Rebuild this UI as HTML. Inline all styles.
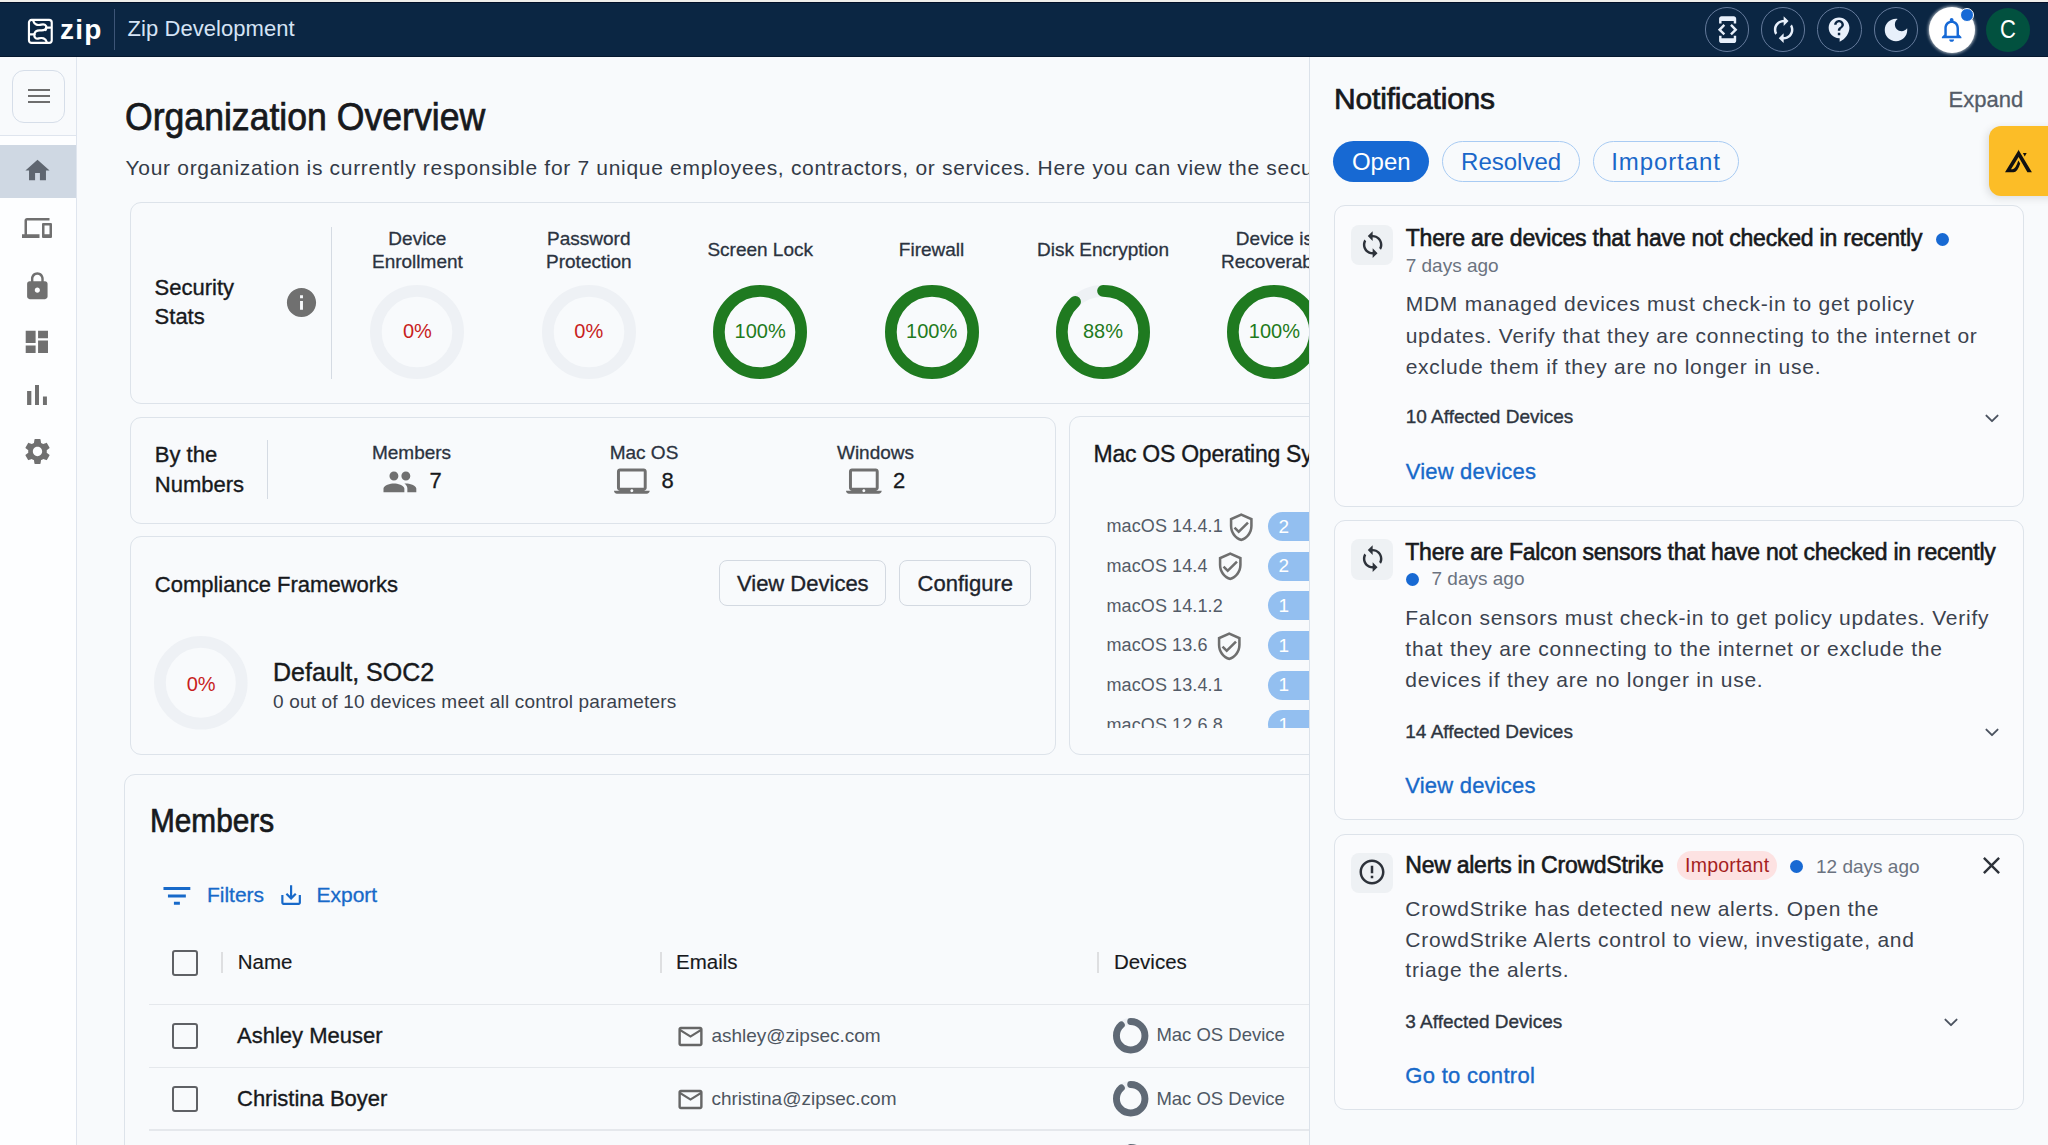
<!DOCTYPE html>
<html><head><meta charset="utf-8"><style>
html,body{margin:0;padding:0;}
body{width:2048px;height:1145px;overflow:hidden;position:relative;background:#f8fafc;font-family:"Liberation Sans", sans-serif;}
.t{position:absolute;line-height:1;white-space:nowrap;font-family:"Liberation Sans", sans-serif;}
svg{display:block;}
</style></head><body>
<div style="position:absolute;left:0px;top:0px;width:2048px;height:2px;box-sizing:border-box;background:#efeeea;"></div><div style="position:absolute;left:0px;top:2px;width:2048px;height:55px;box-sizing:border-box;background:#0b2643;border-top:1px solid #021028;border-bottom:1px solid #05182f;"></div><svg style="position:absolute;left:24px;top:15px" width="32" height="32" viewBox="0 0 32 32">
<rect x="4.95" y="4.9" width="22.8" height="23" rx="2.6" fill="none" stroke="#fff" stroke-width="2.15"/>
<g fill="none" stroke="#fff" stroke-width="2.2" stroke-linecap="round">
<path d="M9.3 6 C10.3 9.8 14 10.6 17.3 9.6 C20.3 8.7 22.8 10.3 22.3 12.6 C21.8 15 19.2 15.6 16.6 15.4 C13.8 15.2 10.8 16.2 10.4 19.2"/>
<path d="M22.3 12.6 L26.5 12.6 M10.4 19.4 L6 19.4"/>
<path d="M22.7 27 C21.7 23.2 18 22.4 14.7 23.4 C11.7 24.3 9.9 22.2 10.4 19.4"/>
<path d="M22.3 12.6 C22.3 13.6 22 14.5 21.6 15" />
</g>
</svg><div class="t" style="left:60px;top:16.40px;font-size:28px;font-weight:700;color:#ffffff;letter-spacing:1.2px;">zip</div><div style="position:absolute;left:114px;top:9px;width:1px;height:41px;box-sizing:border-box;background:#3d5577;"></div><div class="t" style="left:127.6px;top:17.60px;font-size:22px;font-weight:400;color:#d5e3f5;letter-spacing:0.05px;">Zip Development</div><div style="position:absolute;left:1704.5px;top:7.3px;width:44.4px;height:44.4px;box-sizing:border-box;border:1.5px solid #63799a;border-radius:50%;"></div><div style="position:absolute;left:1760.8px;top:7.3px;width:44.4px;height:44.4px;box-sizing:border-box;border:1.5px solid #63799a;border-radius:50%;"></div><div style="position:absolute;left:1817.3px;top:7.3px;width:44.4px;height:44.4px;box-sizing:border-box;border:1.5px solid #63799a;border-radius:50%;"></div><div style="position:absolute;left:1873.8px;top:7.3px;width:44.4px;height:44.4px;box-sizing:border-box;border:1.5px solid #63799a;border-radius:50%;"></div><svg style="position:absolute;left:1712.55px;top:14.85px;" width="29.3" height="29.3" viewBox="0 0 24 24"><path fill="#e8f0fb" d="M7 5h10v2h2V3c0-1.1-.9-1.99-2-1.99L7 1c-1.1 0-2 .9-2 2v4h2V5zm8.41 11.59L20 12l-4.59-4.59L14 8.83 17.17 12 14 15.17l1.41 1.42zM10 15.17L6.83 12 10 8.83 8.59 7.41 4 12l4.59 4.59L10 15.17zM17 19H7v-2H5v4c0 1.1.9 2 2 2h10c1.1 0 2-.9 2-2v-4h-2v2z"/></svg><svg style="position:absolute;left:1768.9499999999998px;top:14.85px;" width="29.3" height="29.3" viewBox="0 0 24 24"><path fill="#e8f0fb" d="M12 6v3l4-4-4-4v3c-4.42 0-8 3.58-8 8 0 1.57.46 3.03 1.24 4.26L6.7 14.8c-.45-.83-.7-1.79-.7-2.8 0-3.31 2.69-6 6-6zm6.76 1.74L17.3 9.2c.44.84.7 1.79.7 2.8 0 3.31-2.69 6-6 6v-3l-4 4 4 4v-3c4.42 0 8-3.58 8-8 0-1.57-.46-3.03-1.24-4.26z"/></svg><svg style="position:absolute;left:1824.77px;top:15.059999999999999px;" width="29.3" height="29.3" viewBox="0 0 24 24"><path fill="#e8f0fb" d="M11.5 2C6.81 2 3 5.81 3 10.5S6.81 19 11.5 19h.5v3c4.86-2.34 8-7 8-11.5C20 5.81 16.19 2 11.5 2zm1 14.5h-2v-2h2v2zm0-3.5h-2c0-3.25 3-3 3-5 0-1.1-.9-2-2-2s-2 .9-2 2h-2c0-2.21 1.79-4 4-4s4 1.79 4 4c0 2.5-3 2.75-3 5z"/></svg><svg style="position:absolute;left:1881.3px;top:14.5px;" width="30" height="30" viewBox="0 0 24 24"><path fill="#e8f0fb" d="M12 3c-4.97 0-9 4.03-9 9s4.03 9 9 9 9-4.03 9-9c0-.46-.04-.92-.1-1.36-.98 1.37-2.58 2.26-4.4 2.26-2.98 0-5.4-2.42-5.4-5.4 0-1.81.89-3.42 2.26-4.4-.44-.06-.9-.1-1.36-.1z"/></svg><div style="position:absolute;left:1929px;top:6.600000000000001px;width:46px;height:46px;box-sizing:border-box;background:#fff;border-radius:50%;box-shadow:0 0 3px 1px rgba(255,255,255,0.6);"></div><svg style="position:absolute;left:1937.35px;top:15.055px;" width="29.3" height="29.3" viewBox="0 0 24 24"><path fill="#1669d6" d="M12 22c1.1 0 2-.9 2-2h-4c0 1.1.9 2 2 2zm6-6v-5c0-3.07-1.63-5.64-4.5-6.32V4c0-.83-.67-1.5-1.5-1.5s-1.5.67-1.5 1.5v.68C7.64 5.36 6 7.92 6 11v5l-2 2v1h16v-1l-2-2zm-2 1H8v-6c0-2.48 1.51-4.5 4-4.5s4 2.02 4 4.5v6z"/></svg><div style="position:absolute;left:1960.3px;top:7.699999999999999px;width:14px;height:14px;box-sizing:border-box;background:#1669d6;border:1.5px solid #fff;border-radius:50%;"></div><div style="position:absolute;left:1986px;top:7.5px;width:44px;height:44px;box-sizing:border-box;background:#02513f;border-radius:50%;"></div><div class="t" style="left:1308px;width:1400px;text-align:center;top:17.45px;font-size:25px;font-weight:400;color:#fff;letter-spacing:0px;transform:scaleX(0.88);">C</div><div style="position:absolute;left:0px;top:57px;width:77px;height:1088px;box-sizing:border-box;background:#fdfeff;border-right:1px solid #dfe5ee;"></div><div style="position:absolute;left:0px;top:57px;width:76px;height:78px;box-sizing:border-box;background:#f8fafc;"></div><div style="position:absolute;left:11.5px;top:70px;width:53px;height:53.2px;box-sizing:border-box;border:1.3px solid #d6dee9;border-radius:12px;background:#f8fafc;"></div><div style="position:absolute;left:27.5px;top:88.8px;width:22.5px;height:2.4px;box-sizing:border-box;background:#6e6e6e;"></div><div style="position:absolute;left:27.5px;top:94.8px;width:22.5px;height:2.4px;box-sizing:border-box;background:#6e6e6e;"></div><div style="position:absolute;left:27.5px;top:100.8px;width:22.5px;height:2.4px;box-sizing:border-box;background:#6e6e6e;"></div><div style="position:absolute;left:0px;top:135px;width:76px;height:1px;box-sizing:border-box;background:#dfe5ee;"></div><div style="position:absolute;left:0px;top:145px;width:76px;height:53px;box-sizing:border-box;background:#cfd8e3;"></div><svg style="position:absolute;left:22.5px;top:155.5px;" width="29" height="29" viewBox="0 0 24 24"><path fill="#5f6670" d="M10 20v-6h4v6h5v-8h3L12 3 2 12h3v8z"/></svg><svg style="position:absolute;left:22px;top:212.5px;" width="30" height="30" viewBox="0 0 24 24"><path fill="#707070" d="M4 6h18V4H4c-1.1 0-2 .9-2 2v11H0v3h14v-3H4V6zm19 2h-6c-.55 0-1 .45-1 1v10c0 .55.45 1 1 1h6c.55 0 1-.45 1-1V9c0-.55-.45-1-1-1zm-1 9h-4v-7h4v7z"/></svg><svg style="position:absolute;left:21.75px;top:270.65px;" width="30.7" height="30.7" viewBox="0 0 24 24"><path fill="#707070" d="M18 8h-1V6c0-2.76-2.24-5-5-5S7 3.24 7 6v2H6c-1.1 0-2 .9-2 2v10c0 1.1.9 2 2 2h12c1.1 0 2-.9 2-2V10c0-1.1-.9-2-2-2zm-6 9c-1.1 0-2-.9-2-2s.9-2 2-2 2 .9 2 2-.9 2-2 2zm3.1-9H8.9V6c0-1.71 1.39-3.1 3.1-3.1 1.71 0 3.1 1.39 3.1 3.1v2z"/></svg><svg style="position:absolute;left:22.25px;top:326.84999999999997px;" width="29.7" height="29.7" viewBox="0 0 24 24"><path fill="#707070" d="M3 13h8V3H3v10zm0 8h8v-6H3v6zm10 0h8V11h-8v10zm0-18v6h8V3h-8z"/></svg><svg style="position:absolute;left:20px;top:378.46px;" width="34" height="34" viewBox="0 0 24 24"><path fill="#707070" d="M5 9.2h3V19H5zM10.6 5h2.8v14h-2.8zm5.6 8H19v6h-2.8z"/></svg><svg style="position:absolute;left:21.5px;top:436.1px;" width="31" height="31" viewBox="0 0 24 24"><path fill="#707070" d="M19.14 12.94c.04-.3.06-.61.06-.94 0-.32-.02-.64-.07-.94l2.03-1.58c.18-.14.23-.41.12-.61l-1.92-3.32c-.12-.22-.37-.29-.59-.22l-2.39.96c-.5-.38-1.03-.7-1.62-.94l-.36-2.54c-.04-.24-.24-.41-.48-.41h-3.84c-.24 0-.43.17-.47.41l-.36 2.54c-.59.24-1.13.57-1.62.94l-2.39-.96c-.22-.08-.47 0-.59.22L2.74 8.87c-.12.21-.08.47.12.61l2.03 1.58c-.05.3-.09.63-.09.94s.02.64.07.94l-2.03 1.58c-.18.14-.23.41-.12.61l1.92 3.32c.12.22.37.29.59.22l2.39-.96c.5.38 1.03.7 1.62.94l.36 2.54c.05.24.24.41.48.41h3.84c.24 0 .44-.17.47-.41l.36-2.54c.59-.24 1.13-.56 1.62-.94l2.39.96c.22.08.47 0 .59-.22l1.92-3.32c.12-.22.07-.47-.12-.61l-2.01-1.58zM12 15.6c-1.98 0-3.6-1.62-3.6-3.6s1.62-3.6 3.6-3.6 3.6 1.62 3.6 3.6-1.62 3.6-3.6 3.6z"/></svg><div class="t" style="left:124.6px;top:97.25px;font-size:39px;font-weight:400;color:#17191c;letter-spacing:0px;transform:scaleX(0.913);transform-origin:0 0;-webkit-text-stroke:0.75px #17191c;">Organization Overview</div><div class="t" style="left:125.6px;top:156.85px;font-size:21px;font-weight:400;color:#333b47;letter-spacing:0.69px;">Your organization is currently responsible for 7 unique employees, contractors, or services. Here you can view the security posture of your organization.</div><div style="position:absolute;left:130px;top:202px;width:1400px;height:201.5px;box-sizing:border-box;border:1.4px solid #dde3ea;border-radius:11px;"></div><div class="t" style="left:154.6px;top:276.80px;font-size:22px;font-weight:400;color:#17191c;letter-spacing:0px;-webkit-text-stroke:0.35px #17191c;">Security</div><div class="t" style="left:154.6px;top:306.10px;font-size:22px;font-weight:400;color:#17191c;letter-spacing:0px;-webkit-text-stroke:0.35px #17191c;">Stats</div><svg style="position:absolute;left:283.5px;top:285.3px;" width="35" height="35" viewBox="0 0 24 24"><path fill="#707070" d="M12 2C6.48 2 2 6.48 2 12s4.48 10 10 10 10-4.48 10-10S17.52 2 12 2zm1 15h-2v-6h2v6zm0-8h-2V7h2v2z"/></svg><div style="position:absolute;left:330.5px;top:226.6px;width:1.2px;height:152.4px;box-sizing:border-box;background:#d5dbe3;"></div><div class="t" style="left:-282.6px;width:1400px;text-align:center;top:228.65px;font-size:19px;font-weight:400;color:#2b3340;letter-spacing:0px;-webkit-text-stroke:0.3px #2b3340;">Device</div><div class="t" style="left:-282.6px;width:1400px;text-align:center;top:252.35px;font-size:19px;font-weight:400;color:#2b3340;letter-spacing:0px;-webkit-text-stroke:0.3px #2b3340;">Enrollment</div><svg style="position:absolute;left:369.4px;top:284px" width="96" height="96" viewBox="0 0 96 96"><circle cx="48.0" cy="48.0" r="41.15" fill="none" stroke="#eef1f5" stroke-width="11.700000000000003"/></svg><div class="t" style="left:-282.6px;width:1400px;text-align:center;top:321.20px;font-size:20px;font-weight:400;color:#c81e1e;letter-spacing:0px;">0%</div><div class="t" style="left:-111.20000000000005px;width:1400px;text-align:center;top:228.65px;font-size:19px;font-weight:400;color:#2b3340;letter-spacing:0px;-webkit-text-stroke:0.3px #2b3340;">Password</div><div class="t" style="left:-111.20000000000005px;width:1400px;text-align:center;top:252.35px;font-size:19px;font-weight:400;color:#2b3340;letter-spacing:0px;-webkit-text-stroke:0.3px #2b3340;">Protection</div><svg style="position:absolute;left:540.8px;top:284px" width="96" height="96" viewBox="0 0 96 96"><circle cx="48.0" cy="48.0" r="41.15" fill="none" stroke="#eef1f5" stroke-width="11.700000000000003"/></svg><div class="t" style="left:-111.20000000000005px;width:1400px;text-align:center;top:321.20px;font-size:20px;font-weight:400;color:#c81e1e;letter-spacing:0px;">0%</div><div class="t" style="left:60.200000000000045px;width:1400px;text-align:center;top:239.85px;font-size:19px;font-weight:400;color:#2b3340;letter-spacing:0px;-webkit-text-stroke:0.3px #2b3340;">Screen Lock</div><svg style="position:absolute;left:712.2px;top:284px" width="96" height="96" viewBox="0 0 96 96"><circle cx="48.0" cy="48.0" r="41.15" fill="none" stroke="#eef1f5" stroke-width="11.700000000000003"/><circle cx="48.0" cy="48.0" r="41.15" fill="none" stroke="#1f7a20" stroke-width="11.700000000000003"/></svg><div class="t" style="left:60.200000000000045px;width:1400px;text-align:center;top:321.20px;font-size:20px;font-weight:400;color:#1f7a20;letter-spacing:0px;">100%</div><div class="t" style="left:231.60000000000002px;width:1400px;text-align:center;top:239.85px;font-size:19px;font-weight:400;color:#2b3340;letter-spacing:0px;-webkit-text-stroke:0.3px #2b3340;">Firewall</div><svg style="position:absolute;left:883.6px;top:284px" width="96" height="96" viewBox="0 0 96 96"><circle cx="48.0" cy="48.0" r="41.15" fill="none" stroke="#eef1f5" stroke-width="11.700000000000003"/><circle cx="48.0" cy="48.0" r="41.15" fill="none" stroke="#1f7a20" stroke-width="11.700000000000003"/></svg><div class="t" style="left:231.60000000000002px;width:1400px;text-align:center;top:321.20px;font-size:20px;font-weight:400;color:#1f7a20;letter-spacing:0px;">100%</div><div class="t" style="left:403px;width:1400px;text-align:center;top:239.85px;font-size:19px;font-weight:400;color:#2b3340;letter-spacing:0px;-webkit-text-stroke:0.3px #2b3340;">Disk Encryption</div><svg style="position:absolute;left:1055px;top:284px" width="96" height="96" viewBox="0 0 96 96"><circle cx="48.0" cy="48.0" r="41.15" fill="none" stroke="#eef1f5" stroke-width="11.700000000000003"/><circle cx="48.0" cy="48.0" r="41.15" fill="none" stroke="#1f7a20" stroke-width="11.700000000000003" stroke-linecap="round" stroke-dasharray="227.52670634358716 258.55307539044" transform="rotate(-90 48.0 48.0)"/></svg><div class="t" style="left:403px;width:1400px;text-align:center;top:321.20px;font-size:20px;font-weight:400;color:#1f7a20;letter-spacing:0px;">88%</div><div class="t" style="left:574.4000000000001px;width:1400px;text-align:center;top:228.65px;font-size:19px;font-weight:400;color:#2b3340;letter-spacing:0px;-webkit-text-stroke:0.3px #2b3340;">Device is</div><div class="t" style="left:574.4000000000001px;width:1400px;text-align:center;top:252.35px;font-size:19px;font-weight:400;color:#2b3340;letter-spacing:0px;-webkit-text-stroke:0.3px #2b3340;">Recoverable</div><svg style="position:absolute;left:1226.4px;top:284px" width="96" height="96" viewBox="0 0 96 96"><circle cx="48.0" cy="48.0" r="41.15" fill="none" stroke="#eef1f5" stroke-width="11.700000000000003"/><circle cx="48.0" cy="48.0" r="41.15" fill="none" stroke="#1f7a20" stroke-width="11.700000000000003"/></svg><div class="t" style="left:574.4000000000001px;width:1400px;text-align:center;top:321.20px;font-size:20px;font-weight:400;color:#1f7a20;letter-spacing:0px;">100%</div><div style="position:absolute;left:130px;top:416.6px;width:926px;height:107px;box-sizing:border-box;border:1.4px solid #dde3ea;border-radius:11px;"></div><div class="t" style="left:154.8px;top:444.30px;font-size:22px;font-weight:400;color:#17191c;letter-spacing:0px;-webkit-text-stroke:0.35px #17191c;">By the</div><div class="t" style="left:154.8px;top:474.30px;font-size:22px;font-weight:400;color:#17191c;letter-spacing:0px;-webkit-text-stroke:0.35px #17191c;">Numbers</div><div style="position:absolute;left:267px;top:439.8px;width:1.2px;height:59.2px;box-sizing:border-box;background:#d5dbe3;"></div><div class="t" style="left:-288.5px;width:1400px;text-align:center;top:443.15px;font-size:19px;font-weight:400;color:#2b3340;letter-spacing:0px;-webkit-text-stroke:0.3px #2b3340;">Members</div><svg style="position:absolute;left:381.9px;top:464.4px;" width="35.8" height="35.8" viewBox="0 0 24 24"><path fill="#707070" d="M16 11c1.66 0 2.99-1.34 2.99-3S17.66 5 16 5c-1.66 0-3 1.34-3 3s1.34 3 3 3zm-8 0c1.66 0 2.99-1.34 2.99-3S9.66 5 8 5C6.34 5 5 6.34 5 8s1.34 3 3 3zm0 2c-2.33 0-7 1.17-7 3.5V19h14v-2.5c0-2.33-4.67-3.5-7-3.5zm8 0c-.29 0-.62.02-.97.05 1.16.84 1.97 1.97 1.97 3.45V19h6v-2.5c0-2.33-4.67-3.5-7-3.5z"/></svg><div class="t" style="left:429.4px;top:469.90px;font-size:22px;font-weight:400;color:#17191c;letter-spacing:0px;-webkit-text-stroke:0.3px #17191c;">7</div><div class="t" style="left:-56px;width:1400px;text-align:center;top:443.15px;font-size:19px;font-weight:400;color:#2b3340;letter-spacing:0px;-webkit-text-stroke:0.3px #2b3340;">Mac OS</div><svg style="position:absolute;left:614px;top:463.5px;" width="35.7" height="35.7" viewBox="0 0 24 24"><path fill="#707070" d="M20 18c1.1 0 1.99-.9 1.99-2L22 5c0-1.1-.9-2-2-2H4c-1.1 0-2 .9-2 2v11c0 1.1.9 2 2 2H0c0 1.1.9 2 2 2h20c1.1 0 2-.9 2-2h-4zM4 5h16v11H4V5zm8 14c-.55 0-1-.45-1-1s.45-1 1-1 1 .45 1 1-.45 1-1 1z"/></svg><div class="t" style="left:661.4px;top:469.90px;font-size:22px;font-weight:400;color:#17191c;letter-spacing:0px;-webkit-text-stroke:0.3px #17191c;">8</div><div class="t" style="left:175.5px;width:1400px;text-align:center;top:443.15px;font-size:19px;font-weight:400;color:#2b3340;letter-spacing:0px;-webkit-text-stroke:0.3px #2b3340;">Windows</div><svg style="position:absolute;left:846px;top:463.5px;" width="35.7" height="35.7" viewBox="0 0 24 24"><path fill="#707070" d="M20 18c1.1 0 1.99-.9 1.99-2L22 5c0-1.1-.9-2-2-2H4c-1.1 0-2 .9-2 2v11c0 1.1.9 2 2 2H0c0 1.1.9 2 2 2h20c1.1 0 2-.9 2-2h-4zM4 5h16v11H4V5zm8 14c-.55 0-1-.45-1-1s.45-1 1-1 1 .45 1 1-.45 1-1 1z"/></svg><div class="t" style="left:893px;top:469.90px;font-size:22px;font-weight:400;color:#17191c;letter-spacing:0px;-webkit-text-stroke:0.3px #17191c;">2</div><div style="position:absolute;left:1068.7px;top:416px;width:600px;height:339px;box-sizing:border-box;border:1.4px solid #dde3ea;border-radius:11px;"></div><div class="t" style="left:1093.5px;top:443.45px;font-size:23px;font-weight:400;color:#17191c;letter-spacing:-0.25px;-webkit-text-stroke:0.35px #17191c;">Mac OS Operating Systems</div><div style="position:absolute;left:1069px;top:500px;width:600px;height:227.5px;overflow:hidden;"><div class="t" style="left:37.5px;top:17.40px;font-size:18px;color:#535b67;letter-spacing:0.1px;">macOS 14.4.1</div><svg style="position:absolute;left:157.19px;top:11.73px" width="30.5" height="30.5" viewBox="0 0 24 24"><path fill="#6f6f6f" d="M12 1L3 5v6c0 5.55 3.84 10.74 9 12 5.16-1.26 9-6.45 9-12V5l-9-4zm7 10c0 4.52-2.98 8.69-7 9.93-4.02-1.24-7-5.41-7-9.93V6.3l7-3.11 7 3.11V11zm-11.59.59L6 13l4 4 8-8-1.41-1.42L10 14.17z"/></svg><div style="position:absolute;left:198.80px;top:12.00px;width:80px;height:29px;border-radius:14.5px;background:#93bff0;"></div><div class="t" style="left:209.50px;top:16.55px;font-size:19px;color:#fff;">2</div><div class="t" style="left:37.5px;top:57.06px;font-size:18px;color:#535b67;letter-spacing:0.1px;">macOS 14.4</div><svg style="position:absolute;left:145.99px;top:51.39px" width="30.5" height="30.5" viewBox="0 0 24 24"><path fill="#6f6f6f" d="M12 1L3 5v6c0 5.55 3.84 10.74 9 12 5.16-1.26 9-6.45 9-12V5l-9-4zm7 10c0 4.52-2.98 8.69-7 9.93-4.02-1.24-7-5.41-7-9.93V6.3l7-3.11 7 3.11V11zm-11.59.59L6 13l4 4 8-8-1.41-1.42L10 14.17z"/></svg><div style="position:absolute;left:198.80px;top:51.66px;width:80px;height:29px;border-radius:14.5px;background:#93bff0;"></div><div class="t" style="left:209.50px;top:56.21px;font-size:19px;color:#fff;">2</div><div class="t" style="left:37.5px;top:96.72px;font-size:18px;color:#535b67;letter-spacing:0.1px;">macOS 14.1.2</div><div style="position:absolute;left:198.80px;top:91.32px;width:80px;height:29px;border-radius:14.5px;background:#93bff0;"></div><div class="t" style="left:209.50px;top:95.87px;font-size:19px;color:#fff;">1</div><div class="t" style="left:37.5px;top:136.38px;font-size:18px;color:#535b67;letter-spacing:0.1px;">macOS 13.6</div><svg style="position:absolute;left:145.19px;top:130.71px" width="30.5" height="30.5" viewBox="0 0 24 24"><path fill="#6f6f6f" d="M12 1L3 5v6c0 5.55 3.84 10.74 9 12 5.16-1.26 9-6.45 9-12V5l-9-4zm7 10c0 4.52-2.98 8.69-7 9.93-4.02-1.24-7-5.41-7-9.93V6.3l7-3.11 7 3.11V11zm-11.59.59L6 13l4 4 8-8-1.41-1.42L10 14.17z"/></svg><div style="position:absolute;left:198.80px;top:130.98px;width:80px;height:29px;border-radius:14.5px;background:#93bff0;"></div><div class="t" style="left:209.50px;top:135.53px;font-size:19px;color:#fff;">1</div><div class="t" style="left:37.5px;top:176.04px;font-size:18px;color:#535b67;letter-spacing:0.1px;">macOS 13.4.1</div><div style="position:absolute;left:198.80px;top:170.64px;width:80px;height:29px;border-radius:14.5px;background:#93bff0;"></div><div class="t" style="left:209.50px;top:175.19px;font-size:19px;color:#fff;">1</div><div class="t" style="left:37.5px;top:215.70px;font-size:18px;color:#535b67;letter-spacing:0.1px;">macOS 12.6.8</div><div style="position:absolute;left:198.80px;top:210.30px;width:80px;height:29px;border-radius:14.5px;background:#93bff0;"></div><div class="t" style="left:209.50px;top:214.85px;font-size:19px;color:#fff;">1</div></div><div style="position:absolute;left:130px;top:535.6px;width:926px;height:219.4px;box-sizing:border-box;border:1.4px solid #dde3ea;border-radius:11px;"></div><div class="t" style="left:154.8px;top:573.90px;font-size:22px;font-weight:400;color:#17191c;letter-spacing:0px;-webkit-text-stroke:0.35px #17191c;">Compliance Frameworks</div><div style="position:absolute;left:719.3px;top:560.1px;width:167px;height:46.4px;box-sizing:border-box;border:1.3px solid #d3d9e1;border-radius:8px;"></div><div class="t" style="left:102.79999999999995px;width:1400px;text-align:center;top:573.30px;font-size:22px;font-weight:400;color:#1d232b;letter-spacing:0px;-webkit-text-stroke:0.35px #1d232b;">View Devices</div><div style="position:absolute;left:899.2px;top:560.1px;width:132.2px;height:46.4px;box-sizing:border-box;border:1.3px solid #d3d9e1;border-radius:8px;"></div><div class="t" style="left:265.29999999999995px;width:1400px;text-align:center;top:573.30px;font-size:22px;font-weight:400;color:#1d232b;letter-spacing:0px;-webkit-text-stroke:0.35px #1d232b;">Configure</div><svg style="position:absolute;left:153.39999999999998px;top:635.2px" width="95.6" height="95.6" viewBox="0 0 95.6 95.6"><circle cx="47.8" cy="47.8" r="40.9" fill="none" stroke="#eef1f5" stroke-width="11.799999999999997"/></svg><div class="t" style="left:-498.8px;width:1400px;text-align:center;top:673.50px;font-size:20px;font-weight:400;color:#c81e1e;letter-spacing:0px;">0%</div><div class="t" style="left:273px;top:660.45px;font-size:25px;font-weight:400;color:#17191c;letter-spacing:0px;-webkit-text-stroke:0.4px #17191c;">Default, SOC2</div><div class="t" style="left:273px;top:692.45px;font-size:19px;font-weight:400;color:#3a414c;letter-spacing:0.18px;">0 out of 10 devices meet all control parameters</div><div style="position:absolute;left:124.3px;top:773.9px;width:1400px;height:500px;box-sizing:border-box;border:1.4px solid #dde3ea;border-radius:11px;"></div><div class="t" style="left:150.1px;top:803.55px;font-size:33px;font-weight:400;color:#17191c;letter-spacing:0px;transform:scaleX(0.902);transform-origin:0 0;-webkit-text-stroke:0.7px #17191c;">Members</div><svg style="position:absolute;left:159.03px;top:877.62px;" width="35.8" height="35.8" viewBox="0 0 24 24"><path fill="#1769c9" d="M10 18h4v-2h-4v2zM3 6v2h18V6H3zm3 7h12v-2H6v2z"/></svg><div class="t" style="left:206.9px;top:883.95px;font-size:21px;font-weight:400;color:#1769c9;letter-spacing:0px;-webkit-text-stroke:0.3px #1769c9;">Filters</div><svg style="position:absolute;left:277.83000000000004px;top:881.9300000000001px;" width="26.2" height="26.2" viewBox="0 0 24 24"><path fill="#1769c9" d="M19 12v7H5v-7H3v7c0 1.1.9 2 2 2h14c1.1 0 2-.9 2-2v-7h-2zm-6 .67l2.59-2.58L17 11.5l-5 5-5-5 1.41-1.41L11 12.67V3h2z"/></svg><div class="t" style="left:316.5px;top:883.95px;font-size:21px;font-weight:400;color:#1769c9;letter-spacing:0px;-webkit-text-stroke:0.3px #1769c9;">Export</div><div style="position:absolute;left:172.3px;top:949.8px;width:26.2px;height:26.2px;box-sizing:border-box;border:2.6px solid #5f6165;border-radius:3px;"></div><div style="position:absolute;left:221.2px;top:952.4px;width:2px;height:21px;box-sizing:border-box;background:#dedfe1;"></div><div class="t" style="left:237.7px;top:951.58px;font-size:20.5px;font-weight:400;color:#17191c;letter-spacing:0px;-webkit-text-stroke:0.15px #17191c;">Name</div><div style="position:absolute;left:659.6px;top:952.4px;width:2px;height:21px;box-sizing:border-box;background:#dedfe1;"></div><div class="t" style="left:676.1px;top:951.58px;font-size:20.5px;font-weight:400;color:#17191c;letter-spacing:0px;-webkit-text-stroke:0.15px #17191c;">Emails</div><div style="position:absolute;left:1097.4px;top:952.4px;width:2px;height:21px;box-sizing:border-box;background:#dedfe1;"></div><div class="t" style="left:1113.9px;top:951.58px;font-size:20.5px;font-weight:400;color:#17191c;letter-spacing:0px;-webkit-text-stroke:0.15px #17191c;">Devices</div><div style="position:absolute;left:149px;top:1003.5999999999999px;width:1400px;height:1.4px;box-sizing:border-box;background:#e5e8ec;"></div><div style="position:absolute;left:149px;top:1066.8px;width:1400px;height:1.4px;box-sizing:border-box;background:#e5e8ec;"></div><div style="position:absolute;left:149px;top:1129.3px;width:1400px;height:1.4px;box-sizing:border-box;background:#e5e8ec;"></div><div style="position:absolute;left:172.3px;top:1022.4999999999999px;width:26.2px;height:26.2px;box-sizing:border-box;border:2.6px solid #5f6165;border-radius:3px;"></div><div class="t" style="left:237px;top:1024.90px;font-size:22px;font-weight:400;color:#17191c;letter-spacing:0px;-webkit-text-stroke:0.35px #17191c;">Ashley Meuser</div><svg style="position:absolute;left:675.98px;top:1022.0799999999999px;" width="29" height="29" viewBox="0 0 24 24"><path fill="#666" d="M22 6c0-1.1-.9-2-2-2H4c-1.1 0-2 .9-2 2v12c0 1.1.9 2 2 2h16c1.1 0 2-.9 2-2V6zm-2 0l-8 5-8-5h16zm0 12H4V8l8 5 8-5v10z"/></svg><div class="t" style="left:711.4px;top:1026.25px;font-size:19px;font-weight:400;color:#4d5560;letter-spacing:0px;">ashley@zipsec.com</div><svg style="position:absolute;left:1112.3px;top:1016.8999999999999px" width="37.4" height="37.4" viewBox="0 0 37.4 37.4"><circle cx="18.7" cy="18.7" r="14.25" fill="none" stroke="#eef1f5" stroke-width="6.899999999999999"/><circle cx="18.7" cy="18.7" r="14.25" fill="none" stroke="#5f6975" stroke-width="6.899999999999999" stroke-linecap="round" stroke-dasharray="78.791143752032 89.5353906273091" transform="rotate(-90 18.7 18.7)"/></svg><div class="t" style="left:1156.4px;top:1026.47px;font-size:18.5px;font-weight:400;color:#4f5864;letter-spacing:0px;">Mac OS Device</div><div style="position:absolute;left:172.3px;top:1085.7px;width:26.2px;height:26.2px;box-sizing:border-box;border:2.6px solid #5f6165;border-radius:3px;"></div><div class="t" style="left:237px;top:1088.10px;font-size:22px;font-weight:400;color:#17191c;letter-spacing:0px;-webkit-text-stroke:0.35px #17191c;">Christina Boyer</div><svg style="position:absolute;left:675.98px;top:1085.28px;" width="29" height="29" viewBox="0 0 24 24"><path fill="#666" d="M22 6c0-1.1-.9-2-2-2H4c-1.1 0-2 .9-2 2v12c0 1.1.9 2 2 2h16c1.1 0 2-.9 2-2V6zm-2 0l-8 5-8-5h16zm0 12H4V8l8 5 8-5v10z"/></svg><div class="t" style="left:711.4px;top:1089.45px;font-size:19px;font-weight:400;color:#4d5560;letter-spacing:0px;">christina@zipsec.com</div><svg style="position:absolute;left:1112.3px;top:1080.1px" width="37.4" height="37.4" viewBox="0 0 37.4 37.4"><circle cx="18.7" cy="18.7" r="14.25" fill="none" stroke="#eef1f5" stroke-width="6.899999999999999"/><circle cx="18.7" cy="18.7" r="14.25" fill="none" stroke="#5f6975" stroke-width="6.899999999999999" stroke-linecap="round" stroke-dasharray="78.791143752032 89.5353906273091" transform="rotate(-90 18.7 18.7)"/></svg><div class="t" style="left:1156.4px;top:1089.67px;font-size:18.5px;font-weight:400;color:#4f5864;letter-spacing:0px;">Mac OS Device</div><svg style="position:absolute;left:1112.3px;top:1143.3px" width="37.4" height="37.4" viewBox="0 0 37.4 37.4"><circle cx="18.7" cy="18.7" r="14.25" fill="none" stroke="#eef1f5" stroke-width="6.899999999999999"/><circle cx="18.7" cy="18.7" r="14.25" fill="none" stroke="#5f6975" stroke-width="6.899999999999999" stroke-linecap="round" stroke-dasharray="78.791143752032 89.5353906273091" transform="rotate(-90 18.7 18.7)"/></svg><div style="position:absolute;left:1309px;top:57px;width:739px;height:1088px;box-sizing:border-box;background:#f8fafc;border-left:1.2px solid #dbe2ea;"></div><div class="t" style="left:1334.1px;top:83.90px;font-size:30px;font-weight:400;color:#17191c;letter-spacing:-0.2px;-webkit-text-stroke:0.7px #17191c;">Notifications</div><div class="t" style="left:623.2px;width:1400px;text-align:right;top:88.70px;font-size:22px;font-weight:400;color:#545c68;letter-spacing:0px;-webkit-text-stroke:0.3px #545c68;">Expand</div><div style="position:absolute;left:1333.3px;top:141.1px;width:96.1px;height:41.3px;box-sizing:border-box;background:#1769d3;border-radius:21px;"></div><div class="t" style="left:681.3px;width:1400px;text-align:center;top:150.10px;font-size:24px;font-weight:400;color:#fff;letter-spacing:0px;">Open</div><div style="position:absolute;left:1441.8px;top:141.1px;width:138.6px;height:41.3px;box-sizing:border-box;border:1.3px solid #a8cbf3;border-radius:21px;"></div><div class="t" style="left:811.0999999999999px;width:1400px;text-align:center;top:150.10px;font-size:24px;font-weight:400;color:#1a67c9;letter-spacing:0px;">Resolved</div><div style="position:absolute;left:1593.3px;top:141.1px;width:145.4px;height:41.3px;box-sizing:border-box;border:1.3px solid #a8cbf3;border-radius:21px;"></div><div class="t" style="left:966px;width:1400px;text-align:center;top:150.10px;font-size:24px;font-weight:400;color:#1a67c9;letter-spacing:0.9px;">Important</div><div style="position:absolute;left:1989px;top:126.3px;width:80px;height:69.5px;box-sizing:border-box;background:#fcbd27;border-radius:12px;box-shadow:-2px 2px 8px rgba(0,0,0,0.12);"></div><svg style="position:absolute;left:1995px;top:135px" width="50" height="50" viewBox="0 0 50 50">
<path d="M23.6 15.1 L36.9 37.3 L32.4 37.3 L23.6 21.9 Z M23.9 14.6 L23.6 21.9 L16 34.2 L17.5 34.2 Q20.8 33.8 23.3 25.5 L25.2 28.6 Q22.5 37.3 18.5 37.3 L10 37.3 Z" fill="#111"/>
<path d="M27.9 17.9 L31.7 17.9 L29.7 21.4 Z" fill="#111"/>
</svg><div style="position:absolute;left:1334.2px;top:205.4px;width:689.8px;height:301.4px;box-sizing:border-box;border:1.4px solid #dde3ea;border-radius:11px;background:#fafbfd;"></div><div style="position:absolute;left:1351.4px;top:224.70000000000002px;width:41.8px;height:40.5px;box-sizing:border-box;background:#eef1f4;border-radius:8px;"></div><svg style="position:absolute;left:1358.1499999999999px;top:230.04999999999998px;" width="29.3" height="29.3" viewBox="0 0 24 24"><path fill="#2d323a" d="M12 4V1L8 5l4 4V6c3.31 0 6 2.69 6 6 0 1.01-.25 1.97-.7 2.8l1.46 1.46C19.54 15.03 20 13.57 20 12c0-4.42-3.58-8-8-8zm0 14c-3.31 0-6-2.69-6-6 0-1.01.25-1.97.7-2.8L5.24 7.74C4.46 8.97 4 10.43 4 12c0 4.42 3.58 8 8 8v3l4-4-4-4v3z"/></svg><div class="t" style="left:1405.7px;top:227.25px;font-size:23px;font-weight:400;color:#17191c;letter-spacing:-0.2px;-webkit-text-stroke:0.6px #17191c;">There are devices that have not checked in recently</div><div style="position:absolute;left:1935.5px;top:233.1px;width:13px;height:13px;box-sizing:border-box;background:#1769d3;border-radius:50%;"></div><div class="t" style="left:1405.7px;top:255.85px;font-size:19px;font-weight:400;color:#6b7380;letter-spacing:0px;">7 days ago</div><div class="t" style="left:1405.7px;top:293.15px;font-size:21px;font-weight:400;color:#3a424e;letter-spacing:0.75px;">MDM managed devices must check-in to get policy</div><div class="t" style="left:1405.7px;top:324.55px;font-size:21px;font-weight:400;color:#3a424e;letter-spacing:0.75px;">updates. Verify that they are connecting to the internet or</div><div class="t" style="left:1405.7px;top:355.55px;font-size:21px;font-weight:400;color:#3a424e;letter-spacing:0.75px;">exclude them if they are no longer in use.</div><div class="t" style="left:1405.7px;top:407.45px;font-size:19px;font-weight:400;color:#2e3540;letter-spacing:0px;-webkit-text-stroke:0.35px #2e3540;">10 Affected Devices</div><svg style="position:absolute;left:1981.75px;top:408.4px" width="20" height="20" viewBox="0 0 20 20"><path d="M4.4 7.6 L10 13.2 L15.6 7.6" fill="none" stroke="#4b5360" stroke-width="1.9" stroke-linecap="round" stroke-linejoin="round"/></svg><div class="t" style="left:1405.7px;top:461.10px;font-size:22px;font-weight:400;color:#1769c9;letter-spacing:0.2px;-webkit-text-stroke:0.35px #1769c9;">View devices</div><div style="position:absolute;left:1334.2px;top:519.9px;width:689.8px;height:299.80000000000007px;box-sizing:border-box;border:1.4px solid #dde3ea;border-radius:11px;background:#fafbfd;"></div><div style="position:absolute;left:1351.4px;top:539.1999999999999px;width:41.8px;height:40.5px;box-sizing:border-box;background:#eef1f4;border-radius:8px;"></div><svg style="position:absolute;left:1358.1499999999999px;top:543.5500000000001px;" width="29.3" height="29.3" viewBox="0 0 24 24"><path fill="#2d323a" d="M12 4V1L8 5l4 4V6c3.31 0 6 2.69 6 6 0 1.01-.25 1.97-.7 2.8l1.46 1.46C19.54 15.03 20 13.57 20 12c0-4.42-3.58-8-8-8zm0 14c-3.31 0-6-2.69-6-6 0-1.01.25-1.97.7-2.8L5.24 7.74C4.46 8.97 4 10.43 4 12c0 4.42 3.58 8 8 8v3l4-4-4-4v3z"/></svg><div class="t" style="left:1405.3px;top:540.85px;font-size:23px;font-weight:400;color:#17191c;letter-spacing:-0.25px;-webkit-text-stroke:0.6px #17191c;">There are Falcon sensors that have not checked in recently</div><div style="position:absolute;left:1405.5px;top:572.9px;width:13px;height:13px;box-sizing:border-box;background:#1769d3;border-radius:50%;"></div><div class="t" style="left:1431.5px;top:569.45px;font-size:19px;font-weight:400;color:#6b7380;letter-spacing:0px;">7 days ago</div><div class="t" style="left:1405.3px;top:607.15px;font-size:21px;font-weight:400;color:#3a424e;letter-spacing:0.75px;">Falcon sensors must check-in to get policy updates. Verify</div><div class="t" style="left:1405.3px;top:638.15px;font-size:21px;font-weight:400;color:#3a424e;letter-spacing:0.75px;">that they are connecting to the internet or exclude the</div><div class="t" style="left:1405.3px;top:668.55px;font-size:21px;font-weight:400;color:#3a424e;letter-spacing:0.75px;">devices if they are no longer in use.</div><div class="t" style="left:1405.3px;top:722.15px;font-size:19px;font-weight:400;color:#2e3540;letter-spacing:0px;-webkit-text-stroke:0.35px #2e3540;">14 Affected Devices</div><svg style="position:absolute;left:1981.75px;top:722px" width="20" height="20" viewBox="0 0 20 20"><path d="M4.4 7.6 L10 13.2 L15.6 7.6" fill="none" stroke="#4b5360" stroke-width="1.9" stroke-linecap="round" stroke-linejoin="round"/></svg><div class="t" style="left:1405.3px;top:775.10px;font-size:22px;font-weight:400;color:#1769c9;letter-spacing:0.2px;-webkit-text-stroke:0.35px #1769c9;">View devices</div><div style="position:absolute;left:1334.2px;top:833.5px;width:689.8px;height:276.0999999999999px;box-sizing:border-box;border:1.4px solid #dde3ea;border-radius:11px;background:#fafbfd;"></div><div style="position:absolute;left:1351.4px;top:852.8px;width:41.8px;height:40.5px;box-sizing:border-box;background:#eef1f4;border-radius:8px;"></div><svg style="position:absolute;left:1357.3px;top:856.5px;" width="30" height="30" viewBox="0 0 24 24"><path fill="#2d323a" d="M11 15h2v2h-2zm0-8h2v6h-2zm.99-5C6.47 2 2 6.48 2 12s4.47 10 9.99 10C17.52 22 22 17.52 22 12S17.52 2 11.99 2zM12 20c-4.42 0-8-3.58-8-8s3.58-8 8-8 8 3.58 8 8-3.58 8-8 8z"/></svg><div class="t" style="left:1405.3px;top:854.45px;font-size:23px;font-weight:400;color:#17191c;letter-spacing:-0.25px;-webkit-text-stroke:0.6px #17191c;">New alerts in CrowdStrike</div><div style="position:absolute;left:1677px;top:851px;width:100.4px;height:29.3px;box-sizing:border-box;background:#fde2e2;border-radius:15px;"></div><div class="t" style="left:1027.2px;width:1400px;text-align:center;top:856.42px;font-size:19.5px;font-weight:400;color:#a51f1f;letter-spacing:0.2px;">Important</div><div style="position:absolute;left:1790.2px;top:859.5px;width:13px;height:13px;box-sizing:border-box;background:#1769d3;border-radius:50%;"></div><div class="t" style="left:1816px;top:856.85px;font-size:19px;font-weight:400;color:#6b7380;letter-spacing:0px;">12 days ago</div><svg style="position:absolute;left:1976.5px;top:851.2px;" width="29" height="29" viewBox="0 0 24 24"><path fill="#2d323a" d="M19 6.41L17.59 5 12 10.59 6.41 5 5 6.41 10.59 12 5 17.59 6.41 19 12 13.41 17.59 19 19 17.59 13.41 12z"/></svg><div class="t" style="left:1405.3px;top:897.85px;font-size:21px;font-weight:400;color:#3a424e;letter-spacing:0.75px;">CrowdStrike has detected new alerts. Open the</div><div class="t" style="left:1405.3px;top:928.85px;font-size:21px;font-weight:400;color:#3a424e;letter-spacing:0.75px;">CrowdStrike Alerts control to view, investigate, and</div><div class="t" style="left:1405.3px;top:959.15px;font-size:21px;font-weight:400;color:#3a424e;letter-spacing:0.75px;">triage the alerts.</div><div class="t" style="left:1405.3px;top:1012.05px;font-size:19px;font-weight:400;color:#2e3540;letter-spacing:0px;-webkit-text-stroke:0.35px #2e3540;">3 Affected Devices</div><svg style="position:absolute;left:1940.5px;top:1012px" width="20" height="20" viewBox="0 0 20 20"><path d="M4.4 7.6 L10 13.2 L15.6 7.6" fill="none" stroke="#4b5360" stroke-width="1.9" stroke-linecap="round" stroke-linejoin="round"/></svg><div class="t" style="left:1405.3px;top:1065.00px;font-size:22px;font-weight:400;color:#1769c9;letter-spacing:0.3px;-webkit-text-stroke:0.35px #1769c9;">Go to control</div>
</body></html>
